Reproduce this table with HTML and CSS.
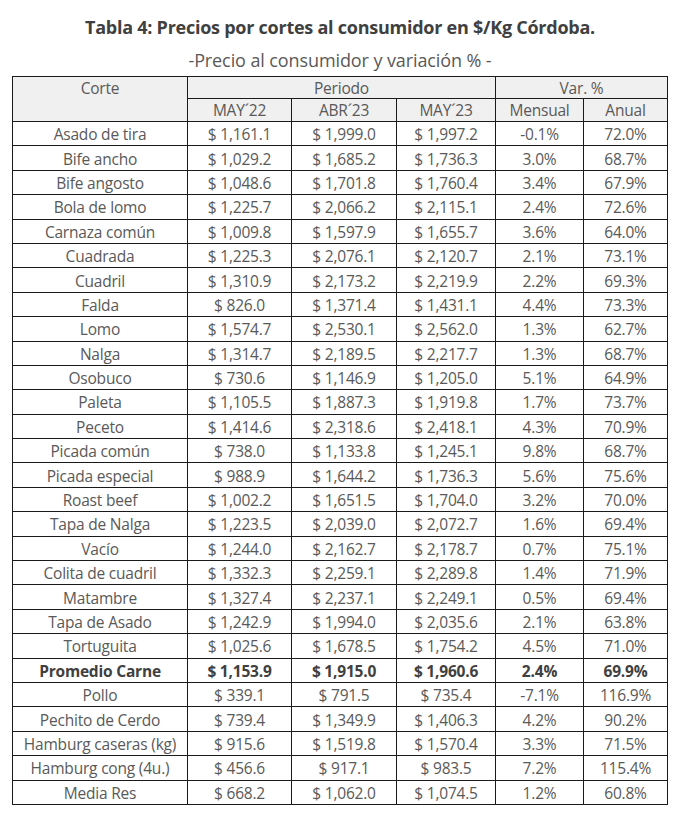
FILE: index.html
```html
<!DOCTYPE html>
<html lang="es">
<head>
<meta charset="utf-8">
<title>Tabla 4</title>
<link rel="stylesheet" href="styles.css">
</head>
<body>
<div class="page">
  <header class="heading">
    <h1 class="title">Tabla 4: Precios por cortes al consumidor en $/Kg Córdoba.</h1>
    <p class="subtitle">-Precio al consumidor y variación % -</p>
  </header>
  <table class="prices">
    <colgroup>
      <col class="c-corte"><col class="c-p1"><col class="c-p2"><col class="c-p3"><col class="c-men"><col class="c-anu">
    </colgroup>
    <thead>
      <tr class="h1">
        <th rowspan="2" class="corte-h">Corte</th>
        <th colspan="3">Periodo</th>
        <th colspan="2">Var. %</th>
      </tr>
      <tr class="h2">
        <th>MAY´22</th><th>ABR´23</th><th>MAY´23</th><th>Mensual</th><th>Anual</th>
      </tr>
    </thead>
    <tbody>
      <tr><td>Asado de tira</td><td>$ 1,161.1</td><td>$ 1,999.0</td><td>$ 1,997.2</td><td>-0.1%</td><td>72.0%</td></tr>
      <tr><td>Bife ancho</td><td>$ 1,029.2</td><td>$ 1,685.2</td><td>$ 1,736.3</td><td>3.0%</td><td>68.7%</td></tr>
      <tr><td>Bife angosto</td><td>$ 1,048.6</td><td>$ 1,701.8</td><td>$ 1,760.4</td><td>3.4%</td><td>67.9%</td></tr>
      <tr><td>Bola de lomo</td><td>$ 1,225.7</td><td>$ 2,066.2</td><td>$ 2,115.1</td><td>2.4%</td><td>72.6%</td></tr>
      <tr><td>Carnaza común</td><td>$ 1,009.8</td><td>$ 1,597.9</td><td>$ 1,655.7</td><td>3.6%</td><td>64.0%</td></tr>
      <tr><td>Cuadrada</td><td>$ 1,225.3</td><td>$ 2,076.1</td><td>$ 2,120.7</td><td>2.1%</td><td>73.1%</td></tr>
      <tr><td>Cuadril</td><td>$ 1,310.9</td><td>$ 2,173.2</td><td>$ 2,219.9</td><td>2.2%</td><td>69.3%</td></tr>
      <tr><td>Falda</td><td>$ 826.0</td><td>$ 1,371.4</td><td>$ 1,431.1</td><td>4.4%</td><td>73.3%</td></tr>
      <tr><td>Lomo</td><td>$ 1,574.7</td><td>$ 2,530.1</td><td>$ 2,562.0</td><td>1.3%</td><td>62.7%</td></tr>
      <tr><td>Nalga</td><td>$ 1,314.7</td><td>$ 2,189.5</td><td>$ 2,217.7</td><td>1.3%</td><td>68.7%</td></tr>
      <tr><td>Osobuco</td><td>$ 730.6</td><td>$ 1,146.9</td><td>$ 1,205.0</td><td>5.1%</td><td>64.9%</td></tr>
      <tr><td>Paleta</td><td>$ 1,105.5</td><td>$ 1,887.3</td><td>$ 1,919.8</td><td>1.7%</td><td>73.7%</td></tr>
      <tr><td>Peceto</td><td>$ 1,414.6</td><td>$ 2,318.6</td><td>$ 2,418.1</td><td>4.3%</td><td>70.9%</td></tr>
      <tr><td>Picada común</td><td>$ 738.0</td><td>$ 1,133.8</td><td>$ 1,245.1</td><td>9.8%</td><td>68.7%</td></tr>
      <tr><td>Picada especial</td><td>$ 988.9</td><td>$ 1,644.2</td><td>$ 1,736.3</td><td>5.6%</td><td>75.6%</td></tr>
      <tr><td>Roast beef</td><td>$ 1,002.2</td><td>$ 1,651.5</td><td>$ 1,704.0</td><td>3.2%</td><td>70.0%</td></tr>
      <tr><td>Tapa de Nalga</td><td>$ 1,223.5</td><td>$ 2,039.0</td><td>$ 2,072.7</td><td>1.6%</td><td>69.4%</td></tr>
      <tr><td>Vacío</td><td>$ 1,244.0</td><td>$ 2,162.7</td><td>$ 2,178.7</td><td>0.7%</td><td>75.1%</td></tr>
      <tr><td>Colita de cuadril</td><td>$ 1,332.3</td><td>$ 2,259.1</td><td>$ 2,289.8</td><td>1.4%</td><td>71.9%</td></tr>
      <tr><td>Matambre</td><td>$ 1,327.4</td><td>$ 2,237.1</td><td>$ 2,249.1</td><td>0.5%</td><td>69.4%</td></tr>
      <tr><td>Tapa de Asado</td><td>$ 1,242.9</td><td>$ 1,994.0</td><td>$ 2,035.6</td><td>2.1%</td><td>63.8%</td></tr>
      <tr><td>Tortuguita</td><td>$ 1,025.6</td><td>$ 1,678.5</td><td>$ 1,754.2</td><td>4.5%</td><td>71.0%</td></tr>
      <tr class="avg"><td>Promedio Carne</td><td>$ 1,153.9</td><td>$ 1,915.0</td><td>$ 1,960.6</td><td>2.4%</td><td>69.9%</td></tr>
      <tr><td>Pollo</td><td>$ 339.1</td><td>$ 791.5</td><td>$ 735.4</td><td>-7.1%</td><td>116.9%</td></tr>
      <tr><td>Pechito de Cerdo</td><td>$ 739.4</td><td>$ 1,349.9</td><td>$ 1,406.3</td><td>4.2%</td><td>90.2%</td></tr>
      <tr><td>Hamburg caseras (kg)</td><td>$ 915.6</td><td>$ 1,519.8</td><td>$ 1,570.4</td><td>3.3%</td><td>71.5%</td></tr>
      <tr><td>Hamburg cong (4u.)</td><td>$ 456.6</td><td>$ 917.1</td><td>$ 983.5</td><td>7.2%</td><td>115.4%</td></tr>
      <tr><td>Media Res</td><td>$ 668.2</td><td>$ 1,062.0</td><td>$ 1,074.5</td><td>1.2%</td><td>60.8%</td></tr>
    </tbody>
  </table>
</div>
</body>
</html>
```

FILE: styles.css
```css
html, body {
  margin: 0;
  padding: 0;
  background: #ffffff;
}

body {
  font-family: "Open Sans", "Liberation Sans", sans-serif;
  color: #595959;
}

.page {
  width: 678px;
  padding-top: 14px;
}

.heading {
  text-align: center;
  padding-left: 2px;
}

.title {
  margin: 0;
  font-size: 18px;
  line-height: 26px;
  font-weight: 700;
  color: #404040;
  letter-spacing: -0.25px;
}

.subtitle {
  margin: 9px 0 0;
  font-size: 18px;
  line-height: 22px;
  font-weight: 400;
  color: #595959;
  letter-spacing: -0.1px;
}

.prices {
  margin: 5px 0 0 12px;
  border-collapse: collapse;
  table-layout: fixed;
  width: 655px;
  font-size: 15.5px;
  letter-spacing: -0.2px;
}

.c-corte { width: 175px; }
.c-p1 { width: 104px; }
.c-p2 { width: 105px; }
.c-p3 { width: 99px; }
.c-men { width: 88px; }
.c-anu { width: 84px; }

.prices th,
.prices td {
  border: 1px solid #1a1a1a;
  padding: 0;
  text-align: center;
  vertical-align: middle;
  font-weight: 400;
  white-space: nowrap;
  line-height: 20px;
}

.prices th {
  background: #f0f0f0;
}

.h1 { height: 22px; }
.h2 { height: 23px; }

.corte-h {
  vertical-align: top !important;
  padding-top: 1px !important;
}

.prices tbody tr { height: 24.4px; }

.prices td {
  padding-top: 1px;
}

.prices tr.avg td {
  font-weight: 700;
  color: #404040;
}
```
